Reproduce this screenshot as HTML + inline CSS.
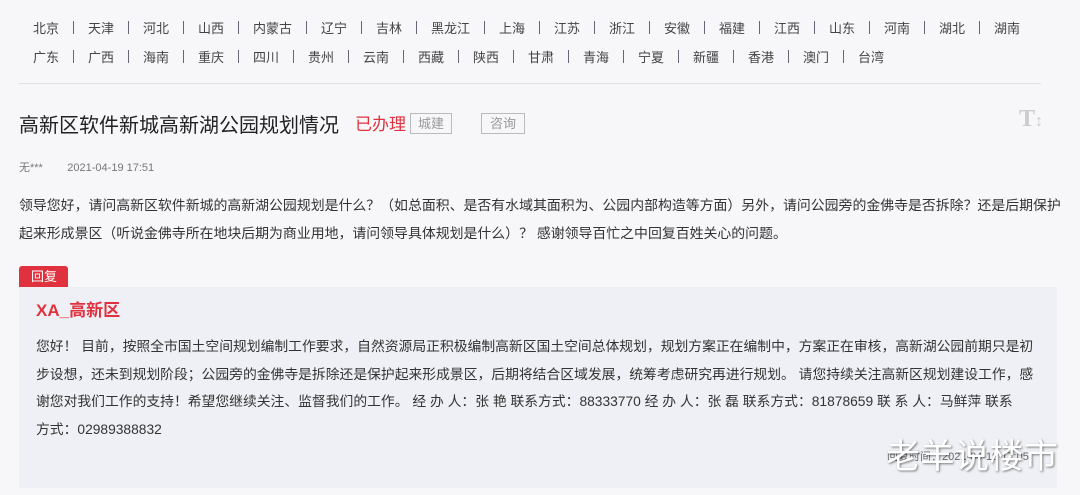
<!DOCTYPE html>
<html><head><meta charset="utf-8"><style>
*{margin:0;padding:0;box-sizing:border-box}
body{width:1080px;height:495px;background:#f7f6f9;font-family:"Liberation Sans","Noto Sans CJK SC",sans-serif;color:#333;position:relative;overflow:hidden}
.nav{position:absolute;left:33px;display:flex;font-size:13px;color:#444;white-space:nowrap}
.nav span{display:inline-block}
.nav i{display:inline-block;width:1px;height:13px;background:#667;margin:3px 14.4px 0 13.6px;vertical-align:top}
.abs{position:absolute;white-space:nowrap}
.tag{position:absolute;border:1px solid #bbb;color:#999;font-size:13px;height:21px;line-height:19px;text-align:center}
</style></head><body>
<div class="nav" style="top:18px"><span>北京</span><i></i><span>天津</span><i></i><span>河北</span><i></i><span>山西</span><i></i><span>内蒙古</span><i></i><span>辽宁</span><i></i><span>吉林</span><i></i><span>黑龙江</span><i></i><span>上海</span><i></i><span>江苏</span><i></i><span>浙江</span><i></i><span>安徽</span><i></i><span>福建</span><i></i><span>江西</span><i></i><span>山东</span><i></i><span>河南</span><i></i><span>湖北</span><i></i><span>湖南</span></div>
<div class="nav" style="top:47px"><span>广东</span><i></i><span>广西</span><i></i><span>海南</span><i></i><span>重庆</span><i></i><span>四川</span><i></i><span>贵州</span><i></i><span>云南</span><i></i><span>西藏</span><i></i><span>陕西</span><i></i><span>甘肃</span><i></i><span>青海</span><i></i><span>宁夏</span><i></i><span>新疆</span><i></i><span>香港</span><i></i><span>澳门</span><i></i><span>台湾</span></div>
<div class="abs" style="left:19px;top:83px;width:1022px;height:1px;background:#e2e2e6"></div>
<div class="abs" style="left:19px;top:112px;font-size:20px;color:#222;line-height:28px">高新区软件新城高新湖公园规划情况</div>
<div class="abs" style="left:355px;top:113px;font-size:17px;color:#e0323e;line-height:24px">已办理</div>
<div class="tag" style="left:410px;top:113px;width:42px">城建</div>
<div class="tag" style="left:481px;top:113px;width:44px">咨询</div>
<div class="abs" style="left:1019px;top:106px;font-family:'Liberation Serif',serif;font-size:24px;font-weight:bold;color:#ccc">T<span style="font-size:16px;font-weight:normal">↕</span></div>
<div class="abs" style="left:19px;top:159px;font-size:11px;color:#777">无***&nbsp;&nbsp;&nbsp;&nbsp;&nbsp;&nbsp;&nbsp;&nbsp;2021-04-19 17:51</div>
<div class="abs" style="left:19px;top:191px;font-size:13.9px;line-height:28px;color:#333">领导您好，请问高新区软件新城的高新湖公园规划是什么？（如总面积、是否有水域其面积为、公园内部构造等方面）另外，请问公园旁的金佛寺是否拆除？还是后期保护<br>起来形成景区（听说金佛寺所在地块后期为商业用地，请问领导具体规划是什么）？ 感谢领导百忙之中回复百姓关心的问题。</div>
<div class="abs" style="left:19px;top:266px;width:49px;height:22px;background:#e0323e;color:#fff;font-size:13px;line-height:22px;padding-left:12px;border-radius:3px 3px 0 0">回复</div>
<div class="abs" style="left:19px;top:287px;width:1038px;height:201px;background:#eff0f5"></div>
<div class="abs" style="left:36px;top:299px;font-size:17px;font-weight:bold;color:#e0323e;line-height:24px">XA_高新区</div>
<div class="abs" style="left:36px;top:333px;font-size:13.8px;line-height:27.7px;color:#333">您好！ 目前，按照全市国土空间规划编制工作要求，自然资源局正积极编制高新区国土空间总体规划，规划方案正在编制中，方案正在审核，高新湖公园前期只是初<br>步设想，还未到规划阶段；公园旁的金佛寺是拆除还是保护起来形成景区，后期将结合区域发展，统筹考虑研究再进行规划。 请您持续关注高新区规划建设工作，感<br>谢您对我们工作的支持！希望您继续关注、监督我们的工作。 经 办 人：张 艳 联系方式：88333770 经 办 人：张 磊 联系方式：81878659 联 系 人：马鲜萍 联系<br>方式：02989388832</div>
<div class="abs" style="left:887px;top:448px;font-size:11px;color:#666">回复时间：2021-04-19 17:05</div>
<div class="abs" style="left:886px;top:436px;font-size:34px;color:#fff;letter-spacing:0.5px;text-shadow:1px 1px 2px rgba(0,0,0,.5);line-height:42px">老羊说楼市</div>
</body></html>
